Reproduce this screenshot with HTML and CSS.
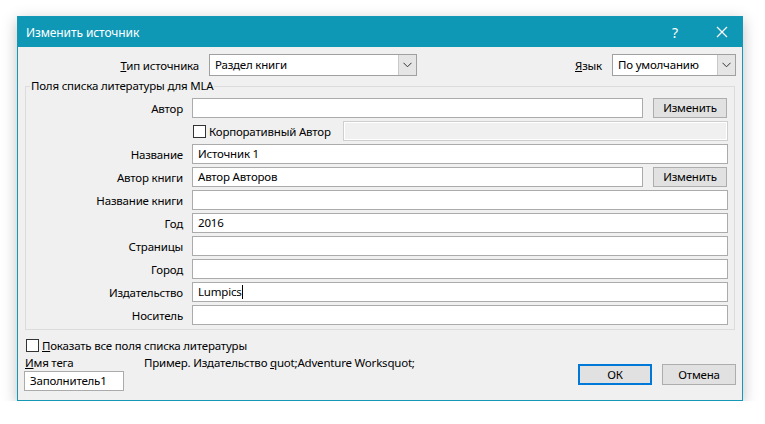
FILE: index.html
```html
<!DOCTYPE html>
<html lang="ru">
<head>
    <meta charset="UTF-8">
    <title>Изменить источник</title>
    <link rel="stylesheet" href="styles.css">
</head>
<body>

    <div class="dialog">
        <div class="titlebar">
            <span class="title">Изменить источник</span>
            <span class="title-help">?</span>
            <span class="title-close">
                <svg width="12" height="12" viewBox="0 0 12 12"><path d="M1 1 L11 11 M11 1 L1 11" stroke="#fff" stroke-width="1.2" fill="none"/></svg>
            </span>
        </div>

        <div class="content">
            <div class="top-row">
                <span class="top-label type-label"><u>Т</u>ип источника</span>
                <div class="select type-select">
                    <span class="select-value">Раздел книги</span>
                    <span class="select-arrow">
                        <svg width="9" height="6" viewBox="0 0 9 6"><path d="M0.5 0.8 L4.5 4.8 L8.5 0.8" stroke="#333" stroke-width="1" fill="none"/></svg>
                    </span>
                </div>
                <span class="top-label lang-label"><u>Я</u>зык</span>
                <div class="select lang-select">
                    <span class="select-value">По умолчанию</span>
                    <span class="select-arrow">
                        <svg width="9" height="6" viewBox="0 0 9 6"><path d="M0.5 0.8 L4.5 4.8 L8.5 0.8" stroke="#333" stroke-width="1" fill="none"/></svg>
                    </span>
                </div>
            </div>

            <fieldset class="group">
                <legend>Поля списка литературы для MLA</legend>
                <div class="fields">
                    <span class="label">Автор</span>
                    <div class="with-btn">
                        <div class="field"></div>
                        <div class="btn small-btn">Изменить</div>
                    </div>

                    <span class="label"></span>
                    <div class="corp-row">
                        <span class="checkbox"></span>
                        <span class="corp-text">Корпоративный Автор</span>
                        <div class="field disabled"></div>
                    </div>

                    <span class="label">Название</span>
                    <div class="field">Источник 1</div>

                    <span class="label">Автор книги</span>
                    <div class="with-btn">
                        <div class="field">Автор Авторов</div>
                        <div class="btn small-btn">Изменить</div>
                    </div>

                    <span class="label">Название книги</span>
                    <div class="field"></div>

                    <span class="label">Год</span>
                    <div class="field">2016</div>

                    <span class="label">Страницы</span>
                    <div class="field"></div>

                    <span class="label">Город</span>
                    <div class="field"></div>

                    <span class="label">Издательство</span>
                    <div class="field">Lumpics<span class="caret"></span></div>

                    <span class="label">Носитель</span>
                    <div class="field"></div>
                </div>
            </fieldset>

            <div class="show-all">
                <span class="checkbox"></span>
                <span><u>П</u>оказать все поля списка литературы</span>
            </div>

            <div class="bottom-row">
                <div class="tag-col">
                    <span><u>И</u>мя тега</span>
                    <div class="field tag-field">Заполнитель1</div>
                </div>
                <span class="example">Пример. Издательство <u>q</u>uot;Adventure Worksquot;</span>
                <div class="buttons">
                    <div class="btn main-btn default">ОК</div>
                    <div class="btn main-btn">Отмена</div>
                </div>
            </div>
        </div>
    </div>

</body>
</html>
```

FILE: styles.css
```css
body {
    margin: 0;
    padding: 0;
    background: #fff;
    font-family: "Noto Sans", "Open Sans", sans-serif;
    font-size: 11.5px;
    letter-spacing: -0.2px;
    color: #000;
}

.dialog {
    margin: 16px 0 0 17px;
    width: 726px;
    height: 385px;
    box-sizing: border-box;
    border: 1px solid #1598b6;
    background: #f0f0f0;
    box-shadow: 0 4px 14px rgba(0, 0, 0, 0.25);
}

.titlebar {
    height: 30px;
    background: #0f98b6;
    color: #fff;
    display: flex;
    align-items: center;
    padding-left: 8px;
}

.title {
    flex: 1;
    font-size: 12px;
    letter-spacing: -0.1px;
}

.title-help {
    font-size: 14px;
    width: 46px;
    text-align: center;
    margin-right: 4px;
}

.title-close {
    width: 40px;
    display: flex;
    justify-content: center;
}

.content {
    padding: 7px 6px 0 7px;
}

.top-row {
    display: flex;
    align-items: center;
    height: 22px;
}

.type-label {
    width: 174px;
    text-align: right;
    margin-right: 10px;
}

.lang-label {
    margin-left: auto;
    margin-right: 10px;
}

.select {
    height: 22px;
    box-sizing: border-box;
    border: 1px solid #a0a0a0;
    background: #fff;
    display: flex;
}

.type-select {
    width: 208px;
}

.lang-select {
    width: 124px;
}

.select-value {
    flex: 1;
    padding-left: 5px;
    line-height: 20px;
}

.select-arrow {
    width: 17px;
    background: #e5e5e5;
    border-left: 1px solid #c8c8c8;
    display: flex;
    align-items: center;
    justify-content: center;
}

.group {
    margin: 2px 1px 0 0;
    padding: 4px 6px 4px 0;
    border: 1px solid #dcdcdc;
    min-width: 0;
}

.group legend {
    padding: 0 1px;
    margin-left: 4px;
    line-height: 16px;
}

.fields {
    display: grid;
    grid-template-columns: 157px 1fr;
    column-gap: 9px;
    row-gap: 3px;
    align-items: center;
}

.label {
    text-align: right;
}

.field {
    height: 20px;
    box-sizing: border-box;
    border: 1px solid #ababab;
    background: #fff;
    padding-left: 5px;
    line-height: 18px;
}

.field.disabled {
    flex: 1;
    background: #f0f0f0;
    border-color: #cfcfcf;
    box-shadow: inset 0 0 0 1px #fff;
}

.caret {
    display: inline-block;
    width: 1px;
    height: 14px;
    background: #000;
    vertical-align: -3px;
}

.with-btn {
    display: flex;
    gap: 10px;
}

.with-btn .field {
    flex: 1;
}

.btn {
    box-sizing: border-box;
    border: 1px solid #adadad;
    background: #e1e1e1;
    text-align: center;
}

.small-btn {
    width: 74px;
    height: 20px;
    line-height: 18px;
    margin-right: 1px;
}

.corp-row {
    display: flex;
    align-items: center;
    height: 20px;
}

.checkbox {
    width: 13px;
    height: 13px;
    box-sizing: border-box;
    border: 1px solid #333;
    background: #fff;
    margin-left: 1px;
    margin-right: 3px;
}

.corp-text {
    width: 134px;
}

.show-all {
    display: flex;
    align-items: center;
    margin-top: 8px;
    height: 14px;
}

.bottom-row {
    display: flex;
    margin-top: 3px;
}

.tag-col {
    width: 119px;
    display: flex;
    flex-direction: column;
    gap: 1px;
}

.tag-field {
    width: 100px;
    margin-left: -1px;
}

.example {
    flex: 1;
}

.buttons {
    display: flex;
    gap: 10px;
    padding-top: 9px;
}

.main-btn {
    width: 74px;
    height: 21px;
    line-height: 19px;
}

.main-btn.default {
    border: 2px solid #0078d7;
    line-height: 17px;
}
```
